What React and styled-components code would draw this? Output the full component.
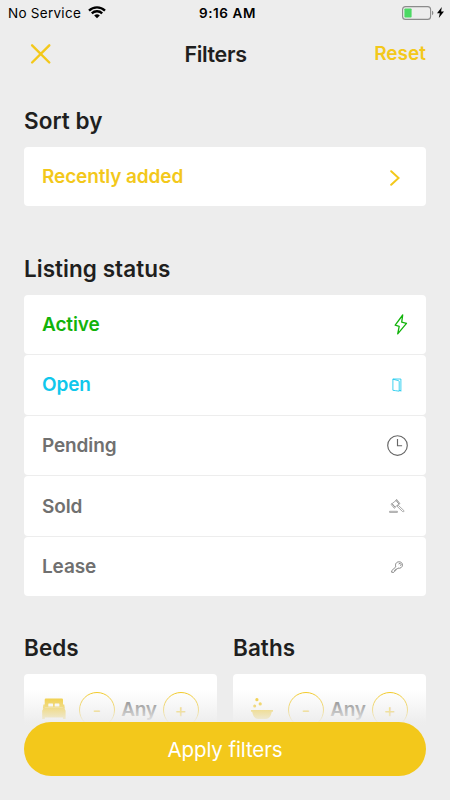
import React from "react";
import styled, { createGlobalStyle } from "styled-components";

const yellow = "#f3c81b";

const GlobalStyle = createGlobalStyle`
  * {
    box-sizing: border-box;
  }
  body {
    margin: 0;
    background: #ededed;
    font-family: Inter, "Liberation Sans", sans-serif;
    color: #1f1f20;
  }
  button {
    font-family: inherit;
    background: none;
    border: 0;
    padding: 0;
    margin: 0;
  }
  svg {
    display: block;
  }
`;

const Screen = styled.div`
  position: relative;
  width: 450px;
  height: 800px;
  overflow: hidden;
  background: #ededed;
`;

const StatusBar = styled.div`
  display: grid;
  grid-template-columns: 1fr auto 1fr;
  align-items: center;
  height: 25px;
  padding: 0 6px 0 8px;
  color: #000;
  font-size: 13.5px;
`;

const Carrier = styled.div`
  display: flex;
  align-items: center;
  gap: 7px;
  letter-spacing: 0.27px;
`;

const Clock = styled.div`
  padding-left: 3px;
  font-weight: 600;
  font-size: 13.5px;
  letter-spacing: 0.6px;
`;

const Power = styled.div`
  display: flex;
  align-items: center;
  justify-content: flex-end;
  gap: 2px;
`;

const Header = styled.header`
  display: grid;
  grid-template-columns: 1fr auto 1fr;
  align-items: center;
  height: 57px;
  padding: 0 24px 0 30px;
`;

const Title = styled.h1`
  margin: 0;
  padding-right: 25px;
  font-size: 21.5px;
  font-weight: 600;
  letter-spacing: -0.35px;
`;

const ResetButton = styled.button`
  justify-self: end;
  color: ${yellow};
  font-size: 19px;
  font-weight: 600;
  letter-spacing: 0;
`;

const Content = styled.main`
  display: flex;
  flex-direction: column;
  padding: 25px 24px 0;
`;

const Section = styled.section`
  margin-bottom: ${props => props.gap}px;
`;

const SectionTitle = styled.h2`
  margin: 0 0 11.5px;
  height: 28px;
  line-height: 28px;
  font-size: 22.5px;
  font-weight: 600;
  letter-spacing: 0.05px;
`;

const List = styled.div`
  display: flex;
  flex-direction: column;
  gap: 1.2px;
`;

const Row = styled.div`
  display: flex;
  align-items: center;
  justify-content: space-between;
  height: 59.4px;
  padding: 0 18px;
  border-radius: 4px;
  background: #fff;
  color: ${props => props.color};
  font-size: 19px;
  font-weight: 600;
  letter-spacing: -0.12px;
`;

const IconBox = styled.span`
  display: flex;
  align-items: center;
  justify-content: center;
  width: 22px;
  height: 22px;
`;

const ArrowBox = styled(IconBox)`
  padding: 4px 4px 0 0;
`;

const Columns = styled.div`
  display: grid;
  grid-template-columns: 1fr 1fr;
  gap: 16px;
`;

const Stepper = styled.div`
  display: flex;
  align-items: center;
  height: 72px;
  padding: 0 18px;
  border-radius: 4px;
  background: #fff;
`;

const RoundButton = styled.button`
  width: 36px;
  height: 36px;
  border: 1.3px solid ${yellow};
  border-radius: 50%;
  color: ${yellow};
  font-size: 19px;
  line-height: 35px;
`;

const StepperIcon = styled.span`
  width: 37px;
`;

const StepperValue = styled.span`
  flex: 1;
  text-align: center;
  color: #6e6e6e;
  font-size: 19px;
  font-weight: 600;
  letter-spacing: -0.2px;
`;

const Footer = styled.footer`
  position: absolute;
  left: 0;
  right: 0;
  bottom: 0;
  height: 110px;
  padding: 31.5px 24px 0;
  background: linear-gradient(
    rgba(237, 237, 237, 0),
    rgba(237, 237, 237, 0.95) 32px,
    #ededed 36px
  );
`;

const ApplyButton = styled.button`
  width: 100%;
  height: 54.5px;
  padding-top: 1px;
  border-radius: 28px;
  background: ${yellow};
  color: #fff;
  font-size: 20.5px;
  letter-spacing: -0.1px;
`;

const WifiIcon = () => (
  <svg width="18" height="13" viewBox="0 0 18 13" fill="none" stroke="#000" strokeWidth="2.3">
    <path d="M1 4.6a11.4 11.4 0 0 1 16 0M3.8 7.4a7.4 7.4 0 0 1 10.4 0" />
    <path d="M9 12.3L6.2 9.6a4 4 0 0 1 5.6 0z" fill="#000" stroke="none" />
  </svg>
);

const BatteryIcon = () => (
  <svg width="33" height="14" viewBox="0 0 33 14" fill="none">
    <rect x="0.6" y="0.6" width="28" height="12.8" rx="3" stroke="#8b8b8b" strokeWidth="1.1" />
    <rect x="2.4" y="2.5" width="7.2" height="9" rx="0.8" fill="#4cd964" />
    <path d="M30 4.8c1.8.6 1.8 3.8 0 4.4z" fill="#8b8b8b" />
  </svg>
);

const ChargeIcon = () => (
  <svg width="7" height="11" viewBox="0 0 7 11">
    <path d="M4.8 0L0 6.2h2.8L1.8 11 7 4.5H4.1z" fill="#000" />
  </svg>
);

const CloseIcon = () => (
  <svg width="22" height="22" viewBox="0 0 22 22" stroke={yellow} strokeWidth="2.4" strokeLinecap="round">
    <path d="M2.1 2.3l17.2 17.2M19.3 2.3L2.1 19.5" />
  </svg>
);

const ArrowIcon = () => (
  <svg width="10" height="16" viewBox="0 0 10 16" fill="none" stroke={yellow} strokeWidth="2">
    <path d="M1.2 1.2L8.6 8l-7.4 6.8" strokeLinecap="round" />
  </svg>
);

const BoltIcon = () => (
  <svg width="14" height="21" viewBox="0 0 14 21" fill="none" stroke="currentColor" strokeWidth="1.3" strokeLinejoin="round">
    <path d="M8.7 1L1.2 11.2l4 1.1-1.5 7.6 8.8-10.6-4.8-1.2z" />
  </svg>
);

const DoorIcon = () => (
  <svg width="10" height="14" viewBox="0 0 10 14" fill="none" stroke="currentColor" strokeWidth="0.8">
    <path d="M.9 1h8v12.5M.9 1v11.3l2.2.3M.9 1.2l5.7 1.5q.6.1.6.8v9.7l-4-.6" />
    <path d="M7.2 12.5h1.7" />
  </svg>
);

const PendingIcon = () => (
  <svg width="21" height="21" viewBox="0 0 21 21" fill="none" stroke="#666" strokeWidth="1.15">
    <circle cx="10.5" cy="10.5" r="9.8" />
    <path d="M10.5 4v6.7h4.6" />
  </svg>
);

const GavelIcon = () => (
  <svg width="16" height="14" viewBox="0 0 16 14" fill="none" stroke="#858585" strokeWidth="0.7" strokeLinejoin="round">
    <path d="M3.2 4.5l4-3.1 2.8 3.5-4 3.2z" />
    <path d="M6.8 1.1l.9-.7 3.3 4.2-.9.6zM2.8 4.6l-.8.7 3.3 4 .9-.7zM8 7.2l1.1-1 5.7 5.3q.5.9-.2 1.2-.7.3-1.1-.2zM.6 13.4v-1.1h7.8v1.1z" />
  </svg>
);

const KeyIcon = () => (
  <svg width="12" height="12" viewBox="0 0 12 12" fill="none" stroke="#6d6d6d" strokeWidth="0.8" strokeLinejoin="round">
    <path d="M4.8 5.8C3.8 2.9 5.5.8 8.1.8c2 0 3.3 1.2 3.3 3.1 0 2.5-2 3.8-4.4 3.2l-.9 1H4.8v1.2H3.6v1.2l-.8.8H.7V9.7z" />
    <path d="M7.6 3l1.5-.7 1 1-.7 1.4" />
  </svg>
);

const BedIcon = () => (
  <svg width="24" height="27" viewBox="0 0 24 27" fill={yellow}>
    <path
      fillRule="evenodd"
      d="M3.9 2.5h15.900q1.200 0 1.200 1.200V11.500H2.700V3.700Q2.700 2.500 3.900 2.500zM6.800 7.500q-.5 0-.5.5v2.500h4.700V8Q11 7.500 10.500 7.500zM13.200 7.500q-.5 0-.5.5v2.500h4.700V8Q17.400 7.500 16.900 7.500z"
    />
    <path d="M1.800 11.400h20.200l1.600 3.300V23H21v-1.500H2.800V23H.2V14.700z" />
    <path d="M1.500 8.500h1.400v4H.8zM22.200 8.500h-1.400v4h2.100z" />
  </svg>
);

const BathIcon = () => (
  <svg width="24" height="27" viewBox="0 0 24 27" fill={yellow}>
    <circle cx="5.900" cy="3.700" r="1.600" />
    <circle cx="9.200" cy="7.900" r="1.600" />
    <circle cx="3.700" cy="10" r="1.500" />
    <path d="M0 14h22v1.800h-1.200q-1.300 7.200-5.800 7.200H7q-4.500 0-5.800-7.200H0z" />
  </svg>
);

const statuses = [
  { name: "Active", color: "#12b30b", Icon: BoltIcon, shift: 7 },
  { name: "Open", color: "#10c7ec", Icon: DoorIcon, shift: 0 },
  { name: "Pending", color: "#707070", Icon: PendingIcon, shift: 0 },
  { name: "Sold", color: "#707070", Icon: GavelIcon, shift: 0 },
  { name: "Lease", color: "#707070", Icon: KeyIcon, shift: 0 }
];

const StatusIcon = styled(IconBox)`
  padding-left: ${props => props.$shift}px;
`;

const Counter = ({ label, icon }) => (
  <section>
    <SectionTitle>{label}</SectionTitle>
    <Stepper>
      <StepperIcon>{icon}</StepperIcon>
      <RoundButton>-</RoundButton>
      <StepperValue>Any</StepperValue>
      <RoundButton>+</RoundButton>
    </Stepper>
  </section>
);

export default function App() {
  return (
    <Screen>
      <GlobalStyle />
      <StatusBar>
        <Carrier>
          No Service
          <WifiIcon />
        </Carrier>
        <Clock>9:16 AM</Clock>
        <Power>
          <BatteryIcon />
          <ChargeIcon />
        </Power>
      </StatusBar>
      <Header>
        <CloseIcon />
        <Title>Filters</Title>
        <ResetButton>Reset</ResetButton>
      </Header>
      <Content>
        <Section gap={49.2}>
          <SectionTitle>Sort by</SectionTitle>
          <Row color={yellow}>
            Recently added
            <ArrowBox>
              <ArrowIcon />
            </ArrowBox>
          </Row>
        </Section>
        <Section gap={38.2}>
          <SectionTitle>Listing status</SectionTitle>
          <List>
            {statuses.map(({ name, color, Icon, shift }) => (
              <Row key={name} color={color}>
                {name}
                <StatusIcon $shift={shift}>
                  <Icon />
                </StatusIcon>
              </Row>
            ))}
          </List>
        </Section>
        <Columns>
          <Counter label="Beds" icon={<BedIcon />} />
          <Counter label="Baths" icon={<BathIcon />} />
        </Columns>
      </Content>
      <Footer>
        <ApplyButton>Apply filters</ApplyButton>
      </Footer>
    </Screen>
  );
}
